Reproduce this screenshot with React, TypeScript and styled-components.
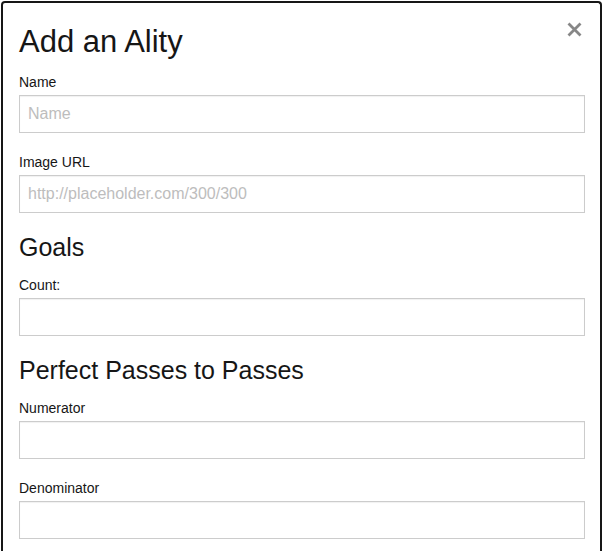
import React from "react";
import styled, { createGlobalStyle } from "styled-components";

const GlobalStyle = createGlobalStyle`
  html, body {
    margin: 0;
    padding: 0;
    background: #ffffff;
    font-family: "Liberation Sans", Arial, sans-serif;
    overflow: hidden;
  }
  * { box-sizing: border-box; }
`;

const Modal = styled.div`
  position: relative;
  margin: 1px 0 0 1px;
  height: 550px;
  background: #ffffff;
  border: 2px solid #161616;
  border-bottom: none;
  border-radius: 4px 4px 0 0;
  padding: 22px 15px 0 16px;
  color: #161616;
`;

const Title = styled.h2`
  margin: 0 0 14px;
  font-size: 31px;
  font-weight: normal;
  line-height: 34px;
`;

const CloseButton = styled.button`
  position: absolute;
  top: 17px;
  right: 16px;
  width: 19px;
  height: 19px;
  padding: 2px;
  border: none;
  background: transparent;
  cursor: pointer;
  display: flex;
  align-items: center;
  justify-content: center;
`;

const SectionTitle = styled.h3`
  margin: 0 0 14px;
  font-size: 25px;
  font-weight: normal;
  line-height: 29px;
`;

const Field = styled.div`
  display: flex;
  flex-direction: column;
  margin-bottom: 20px;
`;

const Label = styled.label`
  font-size: 14px;
  line-height: 18px;
  margin-bottom: 4px;
`;

const Input = styled.input`
  width: 100%;
  height: 38px;
  border: 1px solid #cccccc;
  border-radius: 0;
  box-shadow: inset 0 1px 1px rgba(0, 0, 0, 0.06);
  padding: 0 8px;
  font-family: "Liberation Sans", Arial, sans-serif;
  font-size: 16px;
  color: #222;
  outline: none;
  &::placeholder {
    color: #bdbdbd;
  }
`;

const FormField = ({ label, placeholder }: { label: string; placeholder?: string }) => (
  <Field>
    <Label>{label}</Label>
    <Input placeholder={placeholder} />
  </Field>
);

export default function App() {
  return (
    <>
      <GlobalStyle />
      <Modal>
        <CloseButton aria-label="Close">
          <svg width="15" height="15" viewBox="0 0 15 15">
            <path d="M1.5 1.5 L13.5 13.5 M13.5 1.5 L1.5 13.5" stroke="#878787" strokeWidth="2.8" />
          </svg>
        </CloseButton>
        <Title>Add an Ality</Title>
        <FormField label="Name" placeholder="Name" />
        <FormField label="Image URL" placeholder="http://placeholder.com/300/300" />
        <SectionTitle>Goals</SectionTitle>
        <FormField label="Count:" />
        <SectionTitle>Perfect Passes to Passes</SectionTitle>
        <FormField label="Numerator" />
        <FormField label="Denominator" />
      </Modal>
    </>
  );
}
